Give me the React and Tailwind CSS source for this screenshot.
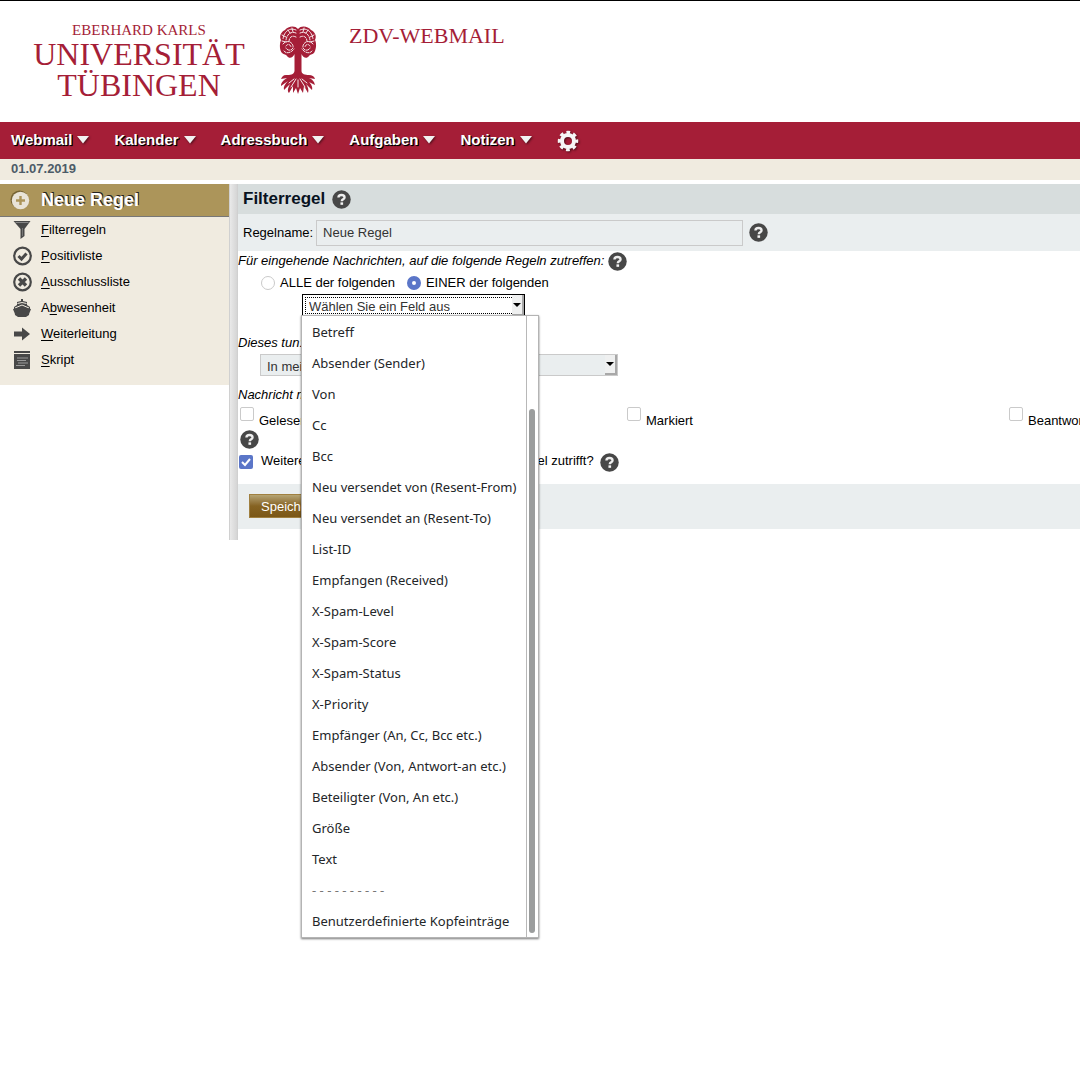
import React from "react";

const FIELDS = [
  "Betreff", "Absender (Sender)", "Von", "Cc", "Bcc",
  "Neu versendet von (Resent-From)", "Neu versendet an (Resent-To)", "List-ID",
  "Empfangen (Received)", "X-Spam-Level", "X-Spam-Score", "X-Spam-Status",
  "X-Priority", "Empfänger (An, Cc, Bcc etc.)", "Absender (Von, Antwort-an etc.)",
  "Beteiligter (Von, An etc.)", "Größe", "Text", "- - - - - - - - - -",
  "Benutzerdefinierte Kopfeinträge",
];

function HelpButton() {
  return (
    <button type="button" aria-label="Hilfe" className="block shrink-0">
      <svg width="19" height="19" viewBox="0 0 20 20" fill="none">
        <circle cx="10" cy="10" r="9.700" fill="#474747" />
        <path d="M6.800 8C6.800 6 8.200 5.300 10 5.300s3.200 .800 3.200 2.500c0 2-2.900 2-2.900 4" stroke="#ededed" strokeWidth="2.500" />
        <rect x="8.900" y="13" width="2.800" height="2.600" fill="#f4f4f4" />
      </svg>
    </button>
  );
}

function TreeLogo() {
  return (
    <svg width="38" height="70" viewBox="0 0 38 70" fill="none" aria-hidden="true">
      <path d="M19 4C16 0 9 1 6 5C2 7 0 11 2 15C0 20 1 26 3 28C5 30 7 29 8 31C10 34 14 33 15.500 29V46C15 50 11 50 7 50C4 50 3 52 2 54L8 53C5 55 2 57 2 61L9 56C6 59 4 62 5 65L11 59C9 63 8 66 10 68L14 61L14 68L17 63L19 69L21 63L24 68L25 61L29 68C30 65 29 62 27 59L33 65C34 62 32 59 30 57L36 60C35 56 33 54 30 53L36 54C35 51 33 50 30 50C26 50 22.500 49 22.500 46V29C24 33 28 34 30 31C31 29 33 30 35 28C37 25 38 19 36 15C38 11 36 7 32 5C29 1 22 0 19 4Z" fill="#a51e37" />
      <g stroke="#fff" strokeWidth="0.900" strokeLinecap="round">
        <path d="M17 5C10 2 5 7 4 14M17 8C12 6 8 9 7 15M17 12C13 10 10 12 10 17M21 5C28 2 33 7 34 14M21 8C26 6 30 9 31 15M21 12C25 10 28 12 28 17" strokeDasharray="2.500 1.400" />
        <path d="M4 19C7 15 13 16 14 21C15 25 9 27 7 23M5 26C7 29 12 28 15 24M7 21C9 18 12 20 12 22M34 19C31 15 25 16 24 21C23 25 29 27 31 23M33 26C31 29 26 28 23 24M31 21C29 18 26 20 26 22" strokeDasharray="2.500 1.300" />
        <path d="M15 54L10 58M17 54L12 62M23 54L28 58M21 54L26 62M19 55V62M9 5L11 8M29 5L27 8M13 3L14 7M25 3L24 7M3 10L7 12M35 10L31 12M3 16L7 17M35 16L31 17" />
      </g>
    </svg>
  );
}

function SideIcon({ name }) {
  const dark = "#484848";
  return (
    <svg width="20" height="20" viewBox="0 0 20 20" fill="none" aria-hidden="true">
      {name === "filter" && (
        <g><path d="M1.500 1H18.500L12.500 9V16L8.500 19V9Z" fill={dark} /><path d="M3.500 2.500H16.500" stroke="#888" /><path d="M10.500 8V16" stroke="#777" /></g>
      )}
      {(name === "check" || name === "cross") && (
        <g><circle cx="10.500" cy="10" r="8.300" stroke={dark} strokeWidth="2.200" />
          {name === "check"
            ? <path d="M6.500 10L9.500 13L14.500 7.500" stroke={dark} strokeWidth="3" />
            : <path d="M7 6.500L14 13.500M14 6.500L7 13.500" stroke={dark} strokeWidth="3.400" />}
        </g>
      )}
      {name === "ship" && (
        <g><path d="M9 1H11V3L15 4V7L18 9V11H2V9L5 7V4L9 3Z" fill={dark} /><path d="M5.500 5.500L10 4.500L14.500 5.500M3 10L10 7L17 10" stroke="#f0ebe0" /><path d="M1 11L10 9L19 11C18 14 17 15 17 17L14 19H6L3 17C3 15 2 14 1 11Z" fill={dark} /></g>
      )}
      {name === "arrow" && <path d="M2 7.500H10V3.500L18 10L10 16.500V12.500H2Z" fill={dark} />}
      {name === "script" && (
        <g><path d="M2 1H18V3H2ZM2 4H18V19H2Z" fill={dark} /><path d="M5 8H16M5 10.500H14M6 13H16M4 15.500H13" stroke="#999" strokeWidth="1.200" /></g>
      )}
    </svg>
  );
}

function SelectArrow() {
  return (
    <span className="pointer-events-none absolute top-px right-px bottom-px flex w-3 items-center justify-center border-r-2 border-b-2 border-[#a8a8a8] bg-[#eff0f0]">
      <svg width="8" height="4" viewBox="0 0 8 4"><path d="M0 0H8L4 4Z" fill="#000" /></svg>
    </span>
  );
}

const NAV = ["Webmail", "Kalender", "Adressbuch", "Aufgaben", "Notizen"];

const SIDE = [
  ["filter", "", "F", "ilterregeln"],
  ["check", "", "P", "ositivliste"],
  ["cross", "", "A", "usschlussliste"],
  ["ship", "A", "b", "wesenheit"],
  ["arrow", "", "W", "eiterleitung"],
  ["script", "", "S", "kript"],
];

const box = "size-3.5 shrink-0 appearance-none rounded-xs border border-[#cacaca] bg-white";

export default function App() {
  return (
    <div className="min-h-screen overflow-hidden border-t border-black bg-white font-['Liberation_Sans',Arial,sans-serif] text-[13px] leading-5 text-black">
      <header className="flex h-[121px] items-start pl-[33px] text-[#a51e37] font-['Liberation_Serif',serif]">
        <div className="w-[212px] pt-5 text-center">
          <div className="text-[15px] leading-[18px]">EBERHARD KARLS</div>
          <div className="text-[32px] leading-[31px]">UNIVERSITÄT</div>
          <div className="text-[32px] leading-[31px]">TÜBINGEN</div>
        </div>
        <div className="pt-6 pl-[34px]"><TreeLogo /></div>
        <div className="pt-[23px] pl-8 text-[22px] leading-6">ZDV-WEBMAIL</div>
      </header>

      <nav className="flex h-[37px] items-center gap-6 bg-[#a51e37] pb-0.5 pl-[11px]">
        {NAV.map((label) => (
          <a key={label} href="#" className="flex items-center gap-1 text-[15px] font-bold text-white [text-shadow:1px_1px_1px_#000,1px_1px_0_#000]">
            {label}
            <svg width="14" height="10" viewBox="0 0 14 10" className="drop-shadow-[1px_1px_1px_#0008]"><path d="M1 1H13L7 8.500Z" fill="#f2f2f2" /></svg>
          </a>
        ))}
        <button type="button" aria-label="Einstellungen" className="pt-0.5 drop-shadow-[1px_1px_1px_#0008]">
          <svg width="22" height="22" viewBox="0 0 22 22" fill="none" stroke="#f6f6f6">
            <circle cx="11" cy="11" r="6" strokeWidth="4" />
            <circle cx="11" cy="11" r="8.500" strokeWidth="3.500" strokeDasharray="3.600 3.076" strokeDashoffset="1.800" />
          </svg>
        </button>
      </nav>
      <div className="mb-1 h-[21px] bg-[#f0ebe0] pl-[11px] text-[13px] font-bold text-[#4c5b68]">01.07.2019</div>

      <div className="flex items-start">
        <aside className="w-[229px] shrink-0 bg-[#f0ebe0] pb-[15px]">
          <button type="button" className="flex h-[33px] w-full items-center gap-[11px] border-b border-[#777] bg-[#ac955a] pl-2.5 text-lg font-bold text-white [text-shadow:1px_-1px_0_#222]">
            <svg width="20" height="20" viewBox="0 0 20 20" fill="none">
              <circle cx="9.500" cy="9.500" r="9" fill="#756333" /><circle cx="10.500" cy="10.500" r="8.700" fill="#e9e4d8" />
              <path d="M6 10.500H15M10.500 6V15" stroke="#ac955a" strokeWidth="2.400" />
            </svg>
            Neue Regel
          </button>
          <ul className="flex flex-col gap-1.5 pt-[3px]">
            {SIDE.map(([icon, pre, key, rest]) => (
              <li key={icon}>
                <a href="#" className="flex h-5 items-center gap-[9px] pl-3">
                  <SideIcon name={icon} />
                  <span className="underline-offset-2">{pre}<span className="underline">{key}</span>{rest}</span>
                </a>
              </li>
            ))}
          </ul>
        </aside>
        <div className="h-[356px] w-[9px] shrink-0 border-x border-[#d0d0d0] bg-linear-to-r from-[#e9e9e9] to-[#d5d5d5]" />

        <main className="min-w-0 flex-1">
          <h1 className="flex h-[30px] items-center gap-[7px] bg-[#d7dddd] pl-[5px] text-[17px] font-bold text-[#07121f]">
            Filterregel <HelpButton />
          </h1>
          <div className="flex h-[37px] items-center bg-[#eaeeef] pl-[5px]">
            <label htmlFor="rulename">Regelname:</label>
            <input id="rulename" defaultValue="Neue Regel" className="mr-1.5 ml-[3px] h-[26px] w-[427px] border border-[#cacaca] bg-[#eaeeef] px-1.5 text-[#333]" />
            <HelpButton />
          </div>
          <div className="flex h-5 items-center gap-1 italic">
            Für eingehende Nachrichten, auf die folgende Regeln zutreffen: <HelpButton />
          </div>
          <div className="flex h-6 items-center pl-[23px]">
            <input id="all" type="radio" name="mode" className="mr-[5px] size-3.5 appearance-none rounded-full border border-[#cacaca] bg-white" />
            <label htmlFor="all" className="mr-3">ALLE der folgenden</label>
            <input id="any" type="radio" name="mode" defaultChecked className="mr-[5px] size-3.5 appearance-none rounded-full border-5 border-[#5b76c8] bg-white" />
            <label htmlFor="any">EINER der folgenden</label>
          </div>
          <div className="relative z-10 mt-[-1px] ml-16 w-[223px]">
            <select aria-label="Feld" className="block h-[23px] w-full appearance-none border border-black bg-white pt-0.5 pl-1.5 text-[#333] outline-1 -outline-offset-4 outline-dotted outline-black">
              <option>Wählen Sie ein Feld aus</option>
            </select>
            <SelectArrow />
            <div className="absolute top-[21px] -left-px flex w-[238px] border border-[#b4b4b4] bg-white shadow-[0_1px_2px_#0008]">
              <ul role="listbox" aria-label="Felder" className="flex-1 pt-px font-['Noto_Sans',sans-serif] text-[13px] leading-[31px] text-[#232629]">
                {FIELDS.map((f) => (
                  <li key={f} role="option" aria-selected="false" className={f.startsWith("-") ? "pl-2.5 whitespace-nowrap text-[#777]" : "pl-2.5 whitespace-nowrap"}>{f}</li>
                ))}
              </ul>
              <div className="flex w-3 items-end border-l border-[#b8b8b8] px-0.5 pb-1">
                <div className="h-[85%] w-1.5 rounded-full bg-[#9b9d9d]" />
              </div>
            </div>
          </div>
          <div className="pt-4 pb-px italic">Dieses tun:</div>
          <div className="relative ml-[22px] w-[358px]">
            <select aria-label="Aktion" className="block h-[22px] w-full appearance-none border border-[#cacaca] bg-[#eaeeef] pt-0.5 pl-1.5 text-[#333]">
              <option>In meinen Posteingang speichern</option>
            </select>
            <SelectArrow />
          </div>
          <div className="pt-[9px] italic">Nachricht markieren als:</div>
          <div className="grid h-6 grid-cols-[387px_382px_382px] overflow-hidden pt-0.5 pl-0.5">
            {["Gelesen", "Markiert", "Beantwortet"].map((l) => (
              <label key={l} className="flex items-start gap-[5px]">
                <input type="checkbox" className={box} />
                <span className="pt-1 leading-5">{l}</span>
              </label>
            ))}
          </div>
          <div className="pt-px pb-px pl-0.5"><HelpButton /></div>
          <div className="flex h-6 items-center pl-px">
            <input id="more" type="checkbox" defaultChecked className="size-3.5 shrink-0 appearance-none rounded-xs bg-[#5b76c8] bg-[url('data:image/svg+xml,%3Csvg%20xmlns=%22http://www.w3.org/2000/svg%22%20viewBox=%220%200%2014%2014%22%3E%3Cpath%20d=%22M3%207L6%2010L11%204%22%20fill=%22none%22%20stroke=%22white%22%20stroke-width=%222%22/%3E%3C/svg%3E')]" />
            <label htmlFor="more" className="mr-1.5 ml-2 pb-0.5 whitespace-nowrap">Weitere Regeln nicht anwenden, falls diese Regel zutrifft?</label>
            <HelpButton />
          </div>
          <div className="mt-2.5 h-[45px] bg-[#eaeeef] pt-2.5 pl-[11px]">
            <button type="button" className="h-6 border border-[#a08040] bg-linear-to-b from-[#b5a473] via-[#866322] via-50% to-[#7b5717] px-[11px] pt-px text-white">Speichern</button>
          </div>
        </main>
      </div>
    </div>
  );
}
